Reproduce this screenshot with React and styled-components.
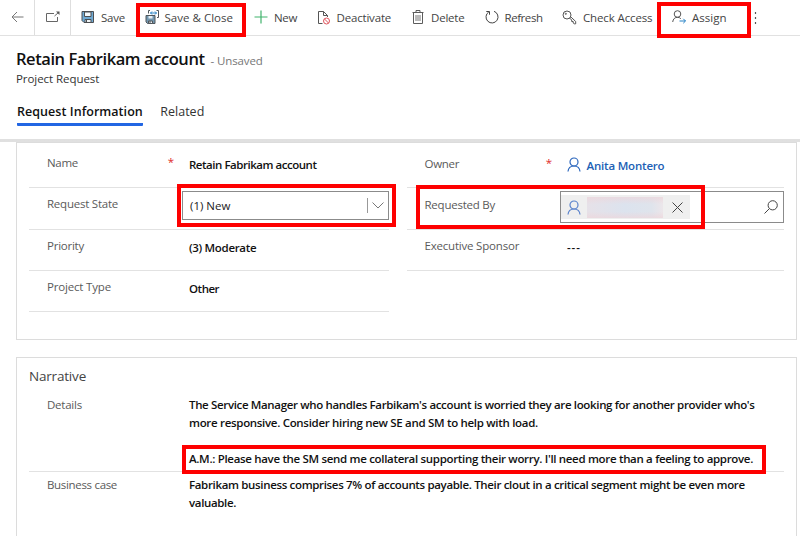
import React from 'react';
import styled, { createGlobalStyle } from 'styled-components';

const GlobalStyle = createGlobalStyle`
  * { box-sizing: border-box; }
  body {
    margin: 0;
    overflow: hidden;
    background: #fff;
    color: #444;
    font: 400 11.5px/16px "Open Sans", "Noto Sans", sans-serif;
  }
`;

const Page = styled.div`
  position: relative;
  width: 800px;
  height: 536px;
  overflow: hidden;
  display: flex;
  flex-direction: column;
`;

const Text = styled.span`
  white-space: nowrap;
  letter-spacing: ${(p) => p.$track || 0}px;
`;

const Toolbar = styled.div`
  flex: none;
  display: flex;
  height: 36px;
  border-bottom: 1px solid #e1e1e1;
`;

const NavCell = styled.div`
  width: ${(p) => p.$width}px;
  display: flex;
  align-items: center;
  justify-content: center;
  padding-bottom: 1px;
  border-right: 1px solid #dedede;
`;

const Commands = styled.div`
  display: flex;
  padding-left: 10px;
`;

const Command = styled.div`
  display: flex;
  align-items: center;
  width: ${(p) => p.$width}px;
  color: #444;
`;

const CommandIcon = styled.span`
  display: flex;
  flex: none;
  width: ${(p) => p.$width}px;
  padding-bottom: 1px;
`;

const Header = styled.header`
  flex: none;
  height: 106px;
  padding: 11px 16px 0;
  border-bottom: 3px solid #d2d2d2;
  border-image: linear-gradient(#c2c2c2, #e0e0e0) 1;
  border-image-width: 0 0 3px 0;
`;

const TitleRow = styled.div`
  display: flex;
  align-items: baseline;
  gap: 6px;
  height: 24px;
  line-height: 24px;
`;

const Title = styled.h1`
  margin: 0;
  white-space: nowrap;
  letter-spacing: -0.43px;
  font-size: 16.5px;
  font-weight: 600;
  color: #111;
`;

const Unsaved = styled(Text)`
  color: #777;
`;

const Subtitle = styled.div`
  height: 16px;
  color: #333;
`;

const Tabs = styled.div`
  display: flex;
  gap: 17.5px;
  margin: 16px 0 0 1px;
  font-size: 12.5px;
`;

const Tab = styled.div`
  height: 23px;
  padding-top: 1px;
  color: ${(p) => (p.$active ? '#111' : '#333')};
  font-weight: ${(p) => (p.$active ? 600 : 400)};
  border-bottom: 3px solid ${(p) => (p.$active ? '#2266e3' : 'transparent')};
  border-radius: 1px;
`;

const Card = styled.section`
  flex: none;
  width: 781px;
  height: ${(p) => p.$height}px;
  margin: 0 0 ${(p) => p.$gap || 0}px 16px;
  border: 1px solid #dcdcdc;
  padding: ${(p) => p.$padding};
`;

const FieldColumns = styled.div`
  display: grid;
  grid-template-columns: 360px 377px;
  column-gap: 18px;
  align-items: start;
`;

const Field = styled.div`
  display: grid;
  grid-template-columns: 160px 1fr;
  height: ${(p) => p.$height}px;
  border-bottom: 1px solid #e2e2e2;
`;

const Label = styled.div`
  display: flex;
  justify-content: space-between;
  padding: ${(p) => p.$top ?? 8}px 15px 0 ${(p) => p.$left ?? 18}px;
  color: #5a5a5a;
`;

const Required = styled.span`
  color: #e02b2b;
  margin-top: -1px;
`;

const Value = styled.div`
  display: flex;
  align-items: flex-start;
  padding-top: ${(p) => p.$top ?? 10}px;
  color: #111;
  font-weight: 600;
`;

const Select = styled.div`
  display: flex;
  align-items: center;
  width: 207px;
  height: 29px;
  margin: 3px 0 0 -7px;
  padding: 0 4px 0 7px;
  border: 1px solid #8b8b8b;
  color: #222;
`;

const Divider = styled.span`
  width: 1px;
  height: 15px;
  margin: 0 4px 0 auto;
  background: #999;
`;

const Lookup = styled.div`
  display: flex;
  align-items: center;
  justify-content: space-between;
  width: 224px;
  height: 32px;
  margin: 3px 0 0 -7px;
  padding: 0 5px 0 0;
  border: 1px solid #8b8b8b;
`;

const Chip = styled.div`
  display: flex;
  align-items: center;
  gap: 6px;
  height: 24px;
  width: 129px;
  padding-left: 6px;
  background: #efefef;
`;

const Redacted = styled.span`
  width: 76px;
  height: 21px;
  margin-right: 3px;
  background:
    linear-gradient(rgba(238, 214, 219, 0.7), transparent 35% 70%, rgba(238, 214, 219, 0.7)),
    linear-gradient(90deg, #e6e1e8, #dce3ee 50%, #dfe4ec 85%, #ece6ea);
`;

const Person = styled.span`
  display: flex;
  gap: 5.5px;
  color: #2060b5;
`;

const PersonName = styled(Text)`
  padding-top: 1px;
`;

const CardTitle = styled.h2`
  margin: 0;
  height: 20px;
  font-size: 13.5px;
  line-height: 20px;
  font-weight: 400;
  color: #444;
`;

const Paragraph = styled.div`
  display: flex;
  flex-direction: column;
  line-height: 18px;
`;

const Spacer = styled.div`
  height: 18px;
`;

const Highlight = styled.div`
  position: absolute;
  left: ${(p) => p.$x}px;
  top: ${(p) => p.$y}px;
  width: ${(p) => p.$w}px;
  height: ${(p) => p.$h}px;
  border: 4px solid #fe0000;
  pointer-events: none;
`;

const Svg = ({ w, h, color = '#555', sw = 1, children }) => (
  <svg width={w} height={h} viewBox={`0 0 ${w} ${h}`} fill="none" stroke={color} strokeWidth={sw}>
    {children}
  </svg>
);

const BackIcon = () => (
  <Svg w={13} h={12} color="#777"><path d="M12.500 6H1M6 1 1 6l5 5" /></Svg>
);
const PopoutIcon = () => (
  <Svg w={14} h={12} color="#666">
    <path d="M8 2.500H.5v8h11V6M8.500 5l4-3.500" />
    <path d="M10 .5h3.500V4z" fill="#555" stroke="none" />
  </Svg>
);
const SaveIcon = () => (
  <Svg w={14} h={14} color="#4c4f52">
    <path d="M1 1.500h11.500v11H3l-2-2z" fill="#6fa9d2" />
    <path d="M3.500 2h6.500v4.500H3.500z" fill="#f4f9fc" />
    <path d="M4 9.500h6v3H4z" fill="#eef2f4" />
    <path d="M5.500 10v2.500" />
  </Svg>
);
const SaveCloseIcon = () => (
  <Svg w={15} h={15} color="#50565b">
    <path d="M1 5.500h9v8H2.500L1 12z" fill="#7397b0" />
    <path d="M3.500 6h4v2.500h-4z" fill="#e4eff6" stroke="none" />
    <path d="M3.500 11h4v2.500h-4z" fill="#eef2f4" />
    <path d="M5 11v2.500M3.500 3.500v-3H5M11.500.5h2v7H12" />
    <path d="M5.500 3h6M7 1.500 5.500 3 7 4.500M10 1.500 11.500 3 10 4.500" stroke="#2481c5" />
  </Svg>
);
const PlusIcon = () => (
  <Svg w={14} h={14} color="#41b36d" sw={1.2}><path d="M7 .5v13M.5 7h13" /></Svg>
);
const DeactivateIcon = () => (
  <Svg w={14} h={15} color="#555">
    <path d="M5.500 13.500H1.500V1.500h5l4 4v1.500M6.500 1.500v4h4" />
    <circle cx="9.500" cy="11" r="3" stroke="#e0555c" />
    <path d="m7.500 9 4 4" stroke="#e0555c" />
  </Svg>
);
const DeleteIcon = () => (
  <Svg w={12} h={14} color="#5c5c5c">
    <path d="M.5 2.500h11M4 2.500v-2h4v2M1.500 2.500v11h9v-11" />
    <path d="M4 5v6M6 5v6M8 5v6" stroke="#777" />
  </Svg>
);
const RefreshIcon = () => (
  <Svg w={14} h={14} color="#444">
    <path d="M9 1.300a6 6 0 1 1-5.200.6M1.300 1.500h3.200v3.200" />
  </Svg>
);
const KeyIcon = () => (
  <Svg w={15} h={15} color="#555">
    <circle cx="5" cy="5" r="4" />
    <circle cx="3.800" cy="3.800" r=".6" />
    <path d="m7.500 8.200 2.200 1.600v1.700h1.500v1.500l1 .8h1.500v-2.300L8.700 6.800" />
  </Svg>
);
const AssignIcon = () => (
  <Svg w={15} h={14} color="#555">
    <circle cx="5.500" cy="4" r="3.300" />
    <path d="M.7 12c.3-3 2.200-4.700 4.800-4.700 1.400 0 2.500.5 3.300 1.400" />
    <path d="M7.500 11h6M11.300 8.800l2.200 2.200-2.200 2.200" stroke="#2481c5" />
  </Svg>
);
const MoreIcon = () => (
  <Svg w={3} h={13}><path d="M1.500 1v2M1.500 6v2M1.500 11v2" strokeWidth="1.200" /></Svg>
);
const PersonIcon = ({ color = '#2b66bd' }) => (
  <Svg w={14} h={15} color={color} sw={1.2}>
    <circle cx="7" cy="5" r="4" />
    <path d="M1 14.500c.3-3.300 2.700-5.500 6-5.500s5.700 2.200 6 5.500" />
  </Svg>
);
const ChevronIcon = () => (
  <Svg w={12} h={7} color="#777"><path d="m.5.5 5.500 5.500L11.500.5" /></Svg>
);
const ClearIcon = () => (
  <Svg w={11} h={11} color="#444"><path d="m.5.5 10 10M10.500.5l-10 10" /></Svg>
);
const SearchIcon = () => (
  <Svg w={14} h={14} color="#444">
    <circle cx="8.700" cy="5.300" r="4.600" /><path d="M5.400 8.600.5 13.500" />
  </Svg>
);

const commands = [
  { label: 'Save', icon: <SaveIcon />, iconWidth: 20, width: 64, track: -0.23 },
  { label: 'Save & Close', icon: <SaveCloseIcon />, iconWidth: 19.5, width: 109, track: 0.02 },
  { label: 'New', icon: <PlusIcon />, iconWidth: 20, width: 63, track: -0.3 },
  { label: 'Deactivate', icon: <DeactivateIcon />, iconWidth: 19.5, width: 95, track: -0.18 },
  { label: 'Delete', icon: <DeleteIcon />, iconWidth: 19, width: 73, track: -0.2 },
  { label: 'Refresh', icon: <RefreshIcon />, iconWidth: 19.5, width: 77, track: -0.44 },
  { label: 'Check Access', icon: <KeyIcon />, iconWidth: 21, width: 110, track: -0.13 },
  { label: 'Assign', icon: <AssignIcon />, iconWidth: 20, width: 82, track: 0 },
];

export default function App() {
  return (
    <Page>
      <GlobalStyle />
      <Toolbar>
        <NavCell $width={35}><BackIcon /></NavCell>
        <NavCell $width={36}><PopoutIcon /></NavCell>
        <Commands>
          {commands.map((c) => (
            <Command key={c.label} $width={c.width}>
              <CommandIcon $width={c.iconWidth}>{c.icon}</CommandIcon>
              <Text $track={c.track}>{c.label}</Text>
            </Command>
          ))}
          <Command $width={4}><MoreIcon /></Command>
        </Commands>
      </Toolbar>

      <Header>
        <TitleRow>
          <Title>Retain Fabrikam account</Title>
          <Unsaved $track={-0.12}>- Unsaved</Unsaved>
        </TitleRow>
        <Subtitle><Text $track={-0.06}>Project Request</Text></Subtitle>
        <Tabs>
          <Tab $active><Text $track={0.05}>Request Information</Text></Tab>
          <Tab><Text>Related</Text></Tab>
        </Tabs>
      </Header>

      <Card $height={198} $gap={17} $padding="4px 12px 0">
        <FieldColumns>
          <div>
            <Field $height={41}>
              <Label><Text $track={-0.3}>Name</Text><Required>*</Required></Label>
              <Value><Text $track={-0.47}>Retain Fabrikam account</Text></Value>
            </Field>
            <Field $height={42}>
              <Label><Text $track={-0.23}>Request State</Text></Label>
              <Select><Text>(1) New</Text><Divider /><ChevronIcon /></Select>
            </Field>
            <Field $height={41}>
              <Label><Text $track={-0.24}>Priority</Text></Label>
              <Value><Text $track={-0.32}>(3) Moderate</Text></Value>
            </Field>
            <Field $height={41}>
              <Label><Text $track={-0.18}>Project Type</Text></Label>
              <Value><Text $track={-0.48}>Other</Text></Value>
            </Field>
          </div>
          <div>
            <Field $height={41}>
              <Label $top={9} $left={17.5}><Text $track={-0.3}>Owner</Text><Required>*</Required></Label>
              <Value>
                <Person><PersonIcon /><PersonName $track={-0.19}>Anita Montero</PersonName></Person>
              </Value>
            </Field>
            <Field $height={42}>
              <Label $top={9} $left={17.5}><Text $track={-0.23}>Requested By</Text></Label>
              <Lookup>
                <Chip><PersonIcon color="#5b83cc" /><Redacted /><ClearIcon /></Chip>
                <SearchIcon />
              </Lookup>
            </Field>
            <Field $height={41}>
              <Label $left={17.5}><Text $track={-0.2}>Executive Sponsor</Text></Label>
              <Value><Text $track={0.9}>---</Text></Value>
            </Field>
          </div>
        </FieldColumns>
      </Card>

      <Card $height={200} $padding="8px 12px 0">
        <CardTitle><Text $track={-0.19}>Narrative</Text></CardTitle>
        <Field $height={86}>
          <Label $top={11}><Text $track={-0.23}>Details</Text></Label>
          <Value>
            <Paragraph>
              <Text $track={-0.35}>The Service Manager who handles Farbikam's account is worried they are looking for another provider who's</Text>
              <Text $track={-0.31}>more responsive. Consider hiring new SE and SM to help with load.</Text>
              <Spacer />
              <Text $track={-0.32}>A.M.: Please have the SM send me collateral supporting their worry. I'll need more than a feeling to approve.</Text>
            </Paragraph>
          </Value>
        </Field>
        <Field $height={90}>
          <Label $top={5}><Text $track={-0.32}>Business case</Text></Label>
          <Value $top={4}>
            <Paragraph>
              <Text $track={-0.34}>Fabrikam business comprises 7% of accounts payable. Their clout in a critical segment might be even more</Text>
              <Text $track={-0.34}>valuable.</Text>
            </Paragraph>
          </Value>
        </Field>
      </Card>

      <Highlight $x={136} $y={3} $w={110} $h={34} />
      <Highlight $x={657} $y={2} $w={94} $h={36} />
      <Highlight $x={177} $y={184} $w={219} $h={43} />
      <Highlight $x={416} $y={185} $w={289} $h={44} />
      <Highlight $x={182} $y={445} $w={584} $h={29} />
    </Page>
  );
}
